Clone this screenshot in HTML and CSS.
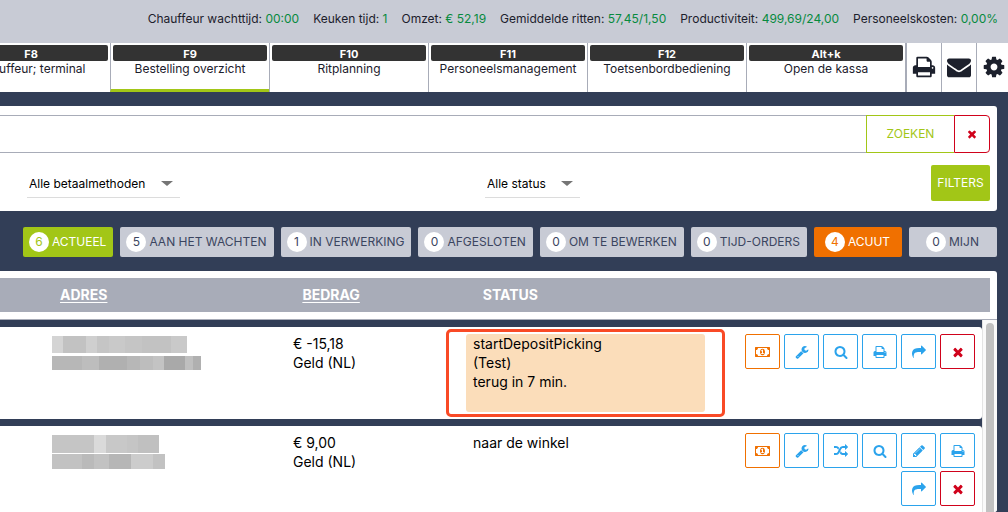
FILE: index.html
```html
<!DOCTYPE html>
<html lang="nl">
<head>
<meta charset="utf-8">
<meta name="viewport" content="width=device-width, initial-scale=1">
<title>Bestelling overzicht</title>
<link rel="stylesheet" href="styles.css">
</head>
<body>
<svg class="sprite" aria-hidden="true">
  <symbol id="print" viewBox="0 0 1792 1792"><path d="M448 1536h896v-256h-896v256zm0-640h896v-384h-160q-40 0-68-28t-28-68v-160h-640v640zm1152 64q0-26-19-45t-45-19-45 19-19 45 19 45 45 19 45-19 19-45zm128 0v416q0 13-9.500 22.500t-22.500 9.500h-224v160q0 40-28 68t-68 28h-960q-40 0-68-28t-28-68v-160h-224q-13 0-22.500-9.500t-9.500-22.500v-416q0-79 56.500-135.500t135.500-56.500h64v-544q0-40 28-68t68-28h672q40 0 88 20t76 48l152 152q28 28 48 76t20 88v256h64q79 0 135.500 56.500t56.500 135.500z"/></symbol>
  <symbol id="envelope" viewBox="0 0 1792 1792"><path d="M1792 710v794q0 66-47 113t-113 47h-1472q-66 0-113-47t-47-113v-794q44 49 101 87 362 246 497 345 57 42 92.500 65.500t94.500 48 110 24.500h2q51 0 110-24.500t94.500-48 92.500-65.500q170-123 498-345 57-39 100-87zm0-294q0 79-49 151t-122 123q-376 261-468 325-10 7-42.500 31t-54 38.500-52 32.500-57.500 27-50 9h-2q-23 0-50-9t-57.500-27-52-32.500-54-38.500-42.500-31q-91-64-262-182.500t-205-142.500q-62-42-117-115.500t-55-136.500q0-78 41.500-130t118.500-52h1472q65 0 112.500 47t47.500 113z"/></symbol>
  <symbol id="cog" viewBox="0 0 1792 1792"><path d="M1152 896q0-106-75-181t-181-75-181 75-75 181 75 181 181 75 181-75 75-181zm512-109v222q0 12-8 23t-20 13l-185 28q-19 54-39 91 35 50 107 138 10 12 10 25t-9 23q-27 37-99 108t-94 71q-12 0-26-9l-138-108q-44 23-91 38-16 136-29 186-7 28-36 28h-222q-14 0-24.500-8.500t-11.500-21.500l-28-184q-49-16-90-37l-141 107q-10 9-25 9-14 0-25-11-126-114-165-168-7-10-7-23 0-12 8-23 15-21 51-66.500t54-70.500q-27-50-41-99l-183-27q-13-2-21-12.500t-8-23.500v-222q0-12 8-23t19-13l186-28q14-46 39-92-40-57-107-138-10-12-10-24 0-10 9-23 26-36 98.500-107.500t94.500-71.500q13 0 26 10l138 107q44-23 91-38 16-136 29-186 7-28 36-28h222q14 0 24.500 8.500t11.500 21.500l28 184q49 16 90 37l142-107q9-9 24-9 13 0 25 10 129 119 165 170 7 8 7 22 0 12-8 23-15 21-51 66.500t-54 70.500q26 50 41 98l183 28q13 2 21 12.500t8 23.500z"/></symbol>
  <symbol id="times" viewBox="0 0 1792 1792"><path d="M1490 1322q0 40-28 68l-136 136q-28 28-68 28t-68-28l-294-294-294 294q-28 28-68 28t-68-28l-136-136q-28-28-28-68t28-68l294-294-294-294q-28-28-28-68t28-68l136-136q28-28 68-28t68 28l294 294 294-294q28-28 68-28t68 28l136 136q28 28 28 68t-28 68l-294 294 294 294q28 28 28 68z"/></symbol>
  <symbol id="search" viewBox="0 0 1792 1792"><path d="M1216 832q0-185-131.500-316.500t-316.500-131.500-316.500 131.500-131.500 316.500 131.500 316.500 316.500 131.500 316.500-131.500 131.500-316.500zm512 832q0 52-38 90t-90 38q-54 0-90-38l-343-342q-179 124-399 124-143 0-273.500-55.500t-225-150-150-225-55.500-273.500 55.500-273.500 150-225 225-150 273.500-55.500 273.500 55.500 225 150 150 225 55.500 273.500q0 220-124 399l343 343q37 37 37 90z"/></symbol>
  <symbol id="wrench" viewBox="0 0 1792 1792"><path d="M448 1472q0-26-19-45t-45-19-45 19-19 45 19 45 45 19 45-19 19-45zm644-420l-682 682q-37 37-90 37-52 0-91-37l-106-108q-38-36-38-90 0-53 38-91l681-681q39 98 114.500 173.500t173.500 114.500zm634-435q0 39-23 106-47 134-164.500 217.500t-258.500 83.500q-185 0-316.500-131.500t-131.500-316.500 131.500-316.500 316.500-131.500q58 0 121.500 16.500t107.500 46.500q16 11 16 28t-16 28l-293 169v224l193 107q5-3 79-48.500t135.500-81 70.500-35.500q15 0 23.500 10t8.500 25z"/></symbol>
  <symbol id="random" viewBox="0 0 1792 1792"><path d="M666 481q-60 92-137 273-22-45-37-72.500t-40.500-63.500-51-56.500-63-35-81.500-14.500h-224q-14 0-23-9t-9-23v-192q0-14 9-23t23-9h224q250 0 410 225zm1126 799q0 14-9 23l-320 320q-9 9-23 9-13 0-22.500-9.500t-9.500-22.500v-192q-32 0-85 .5t-81 1-73-1-71-5-64-10.500-63-18.500-58-28.500-59-40-55-53.500-56-69.500q59-93 136-273 22 45 37 72.500t40.500 63.500 51 56.500 63 35 81.500 14.500h256v-192q0-14 9-23t23-9q12 0 24 10l319 319q9 9 9 23zm0-896q0 14-9 23l-320 320q-9 9-23 9-13 0-22.500-9.500t-9.500-22.500v-192h-256q-48 0-87 15t-69 45-51 61.500-45 77.500q-32 62-78 171-29 66-49.500 111t-54 105-64 100-74 83-90 68.500-106.500 42-128 16.500h-224q-14 0-23-9t-9-23v-192q0-14 9-23t23-9h224q48 0 87-15t69-45 51-61.500 45-77.500q32-62 78-171 29-66 49.500-111t54-105 64-100 74-83 90-68.500 106.500-42 128-16.500h256v-192q0-14 9-23t23-9q12 0 24 10l319 319q9 9 9 23z"/></symbol>
  <symbol id="pencil" viewBox="0 0 1792 1792"><path d="M491 1536l91-91-235-235-91 91v107h128v128h107zm523-928q0-22-22-22-10 0-17 7l-542 542q-7 7-7 17 0 22 22 22 10 0 17-7l542-542q7-7 7-17zm-54-192l416 416-832 832h-416v-416zm683 96q0 53-37 90l-166 166-416-416 166-165q36-38 90-38 53 0 91 38l235 234q37 39 37 91z"/></symbol>
  <symbol id="share" viewBox="0 0 1792 1792"><path d="M1792 640q0 26-19 45l-512 512q-19 19-45 19t-45-19-19-45v-256h-224q-98 0-175.500 6t-154 21.500-133 42.500-105.500 69.500-80 101-48.500 138.500-17.500 181q0 55 5 123 0 6 2.500 23.500t2.500 26.500q0 15-8.500 25t-23.500 10q-16 0-28-17-7-9-13-22t-13.500-30-10.500-24q-127-285-127-451 0-199 53-333 162-403 875-403h224v-256q0-26 19-45t45-19 45 19l512 512q19 19 19 45z"/></symbol>
  <symbol id="money" viewBox="0 0 1920 1792"><path d="M768 1152h384v-96h-128v-448h-114l-148 137 77 80q42-37 55-57h2v288h-128v96zm512-256q0 70-21 142t-59.500 134-101.500 101-138 39-138-39-101.500-101-59.500-134-21-142 21-142 59.500-134 101.500-101 138-39 138 39 101.500 101 59.500 134 21 142zm512 256v-512q-106 0-181-75t-75-181h-1152q0 106-75 181t-181 75v512q106 0 181 75t75 181h1152q0-106 75-181t181-75zm128-832v1152q0 26-19 45t-45 19h-1792q-26 0-45-19t-19-45v-1152q0-26 19-45t45-19h1792q26 0 45 19t19 45z"/></symbol>
</svg>

<header>
  <div class="stats">
    <span>Chauffeur wachttijd: <b>00:00</b></span>
    <span>Keuken tijd: <b>1</b></span>
    <span>Omzet: <b>€ 52,19</b></span>
    <span>Gemiddelde ritten: <b>57,45/1,50</b></span>
    <span>Productiviteit: <b>499,69/24,00</b></span>
    <span>Personeelskosten: <b>0,00%</b></span>
  </div>
  <nav class="tabs">
    <a class="tab" href="#terminal"><kbd>F8</kbd>Chauffeur; terminal</a>
    <a class="tab active" href="#overzicht"><kbd>F9</kbd>Bestelling overzicht</a>
    <a class="tab" href="#ritplanning"><kbd>F10</kbd>Ritplanning</a>
    <a class="tab" href="#personeel"><kbd>F11</kbd>Personeelsmanagement</a>
    <a class="tab" href="#toetsen"><kbd>F12</kbd>Toetsenbordbediening</a>
    <a class="tab" href="#kassa"><kbd>Alt+k</kbd>Open de kassa</a>
    <div class="tools">
      <button type="button" aria-label="Afdrukken"><svg><use href="#print"/></svg></button>
      <button type="button" aria-label="Berichten"><svg><use href="#envelope"/></svg></button>
      <button type="button" aria-label="Instellingen"><svg><use href="#cog"/></svg></button>
    </div>
  </nav>
</header>

<main>
  <form class="panel filter-panel">
    <div class="search">
      <input type="text" aria-label="Zoeken">
      <button class="search-button" type="button">ZOEKEN</button>
      <button class="clear-button" type="button" aria-label="Wissen"><svg><use href="#times"/></svg></button>
    </div>
    <div class="filters">
      <div class="filter"><span class="select-wrap"><select aria-label="Betaalmethode"><option>Alle betaalmethoden</option></select></span></div>
      <div class="filter"><span class="select-wrap"><select aria-label="Status"><option>Alle status</option></select></span></div>
      <button class="filters-button" type="button">FILTERS</button>
    </div>
  </form>

  <div class="pills">
    <button class="pill green" type="button"><span class="count">6</span>ACTUEEL</button>
    <button class="pill" type="button"><span class="count">5</span>AAN HET WACHTEN</button>
    <button class="pill" type="button"><span class="count">1</span>IN VERWERKING</button>
    <button class="pill" type="button"><span class="count">0</span>AFGESLOTEN</button>
    <button class="pill" type="button"><span class="count">0</span>OM TE BEWERKEN</button>
    <button class="pill" type="button"><span class="count">0</span>TIJD-ORDERS</button>
    <button class="pill orange" type="button"><span class="count">4</span>ACUUT</button>
    <button class="pill" type="button"><span class="count">0</span>MIJN</button>
  </div>

  <section class="panel orders">
    <table>
      <thead>
        <tr><th><a href="#adres">ADRES</a></th><th><a href="#bedrag">BEDRAG</a></th><th>STATUS</th><th></th></tr>
      </thead>
      <tbody>
        <tr>
          <td>
            <svg class="masked" viewBox="0 0 149 36" aria-hidden="true">
              <path fill="#d4d4d4" d="M0 2h11v17H0z"/><path fill="#c2c2c2" d="M11 2h23v17H11zM90 2h29v17H90z"/><path fill="#cfcfcf" d="M34 2h11v17H34z"/><path fill="#c5c5c5" d="M45 2h12v17H45zM73 2h17v17H73z"/><path fill="#c9c9c9" d="M57 2h16v17H57zM119 2h16v17h-16z"/>
              <path fill="#b7b7b7" d="M0 22h30v14H0zM75 22h13v14H75z"/><path fill="#bdbdbd" d="M30 22h17v14H30zM88 22h13v14H88z"/><path fill="#b0b0b0" d="M47 22h28v14H47zM141 22h8v14h-8z"/><path fill="#c3c3c3" d="M101 22h11v14h-11z"/><path fill="#a9a9a9" d="M112 22h21v14h-21z"/><path fill="#bfbfbf" d="M133 22h8v14h-8z"/>
            </svg>
          </td>
          <td>€ -15,18<br>Geld (NL)</td>
          <td class="status waiting">startDepositPicking<br>(Test)<br>terug in 7 min.</td>
          <td class="actions">
            <button class="action pay" type="button" aria-label="Betaling"><svg><use href="#money"/></svg></button>
            <button class="action" type="button" aria-label="Aanpassen"><svg><use href="#wrench"/></svg></button>
            <button class="action" type="button" aria-label="Bekijken"><svg><use href="#search"/></svg></button>
            <button class="action" type="button" aria-label="Afdrukken"><svg><use href="#print"/></svg></button>
            <button class="action" type="button" aria-label="Doorsturen"><svg><use href="#share"/></svg></button>
            <button class="action remove" type="button" aria-label="Verwijderen"><svg><use href="#times"/></svg></button>
          </td>
        </tr>
        <tr>
          <td>
            <svg class="masked" viewBox="0 0 149 36" aria-hidden="true">
              <path fill="#c5c5c5" d="M0 2h42v18H0zM75 2h11v18H75z"/><path fill="#dadada" d="M42 2h12v18H42z"/><path fill="#c8c8c8" d="M54 2h21v18H54z"/><path fill="#c0c0c0" d="M86 2h21v18H86z"/>
              <path fill="#c2c2c2" d="M0 21h30v15H0zM42 21h15v15H42zM101 21h12v15h-12z"/><path fill="#bababa" d="M30 21h12v15H30z"/><path fill="#b6b6b6" d="M57 21h22v15H57z"/><path fill="#cccccc" d="M79 21h22v15H79z"/>
            </svg>
          </td>
          <td>€ 9,00<br>Geld (NL)</td>
          <td class="status">naar de winkel</td>
          <td class="actions">
            <button class="action pay" type="button" aria-label="Betaling"><svg><use href="#money"/></svg></button>
            <button class="action" type="button" aria-label="Aanpassen"><svg><use href="#wrench"/></svg></button>
            <button class="action" type="button" aria-label="Wisselen"><svg><use href="#random"/></svg></button>
            <button class="action" type="button" aria-label="Bekijken"><svg><use href="#search"/></svg></button>
            <button class="action" type="button" aria-label="Bewerken"><svg><use href="#pencil"/></svg></button>
            <button class="action" type="button" aria-label="Afdrukken"><svg><use href="#print"/></svg></button>
            <button class="action" type="button" aria-label="Doorsturen"><svg><use href="#share"/></svg></button>
            <button class="action remove" type="button" aria-label="Verwijderen"><svg><use href="#times"/></svg></button>
          </td>
        </tr>
      </tbody>
    </table>
    <div class="scrollbar"><div class="thumb"></div></div>
  </section>
</main>
</body>
</html>
```

FILE: styles.css
```css
:root {
  --navy: #323e57;
  --grey: #c8cbd5;
  --mid: #a8acb8;
  --green: #a2c617;
  --orange: #f07000;
  --blue: #2ba3ec;
  --red: #d0021b;
  --ink: #1c202c;
}

* { box-sizing: border-box; }

body {
  margin: 0;
  height: 100vh;
  overflow: hidden;
  display: flex;
  flex-direction: column;
  background: var(--navy);
  color: #000;
  font: 14px/19px Inter, "Liberation Sans", sans-serif;
}

button, input, select { font: inherit; margin: 0; }
button { cursor: pointer; padding: 0; }
svg { display: block; fill: currentColor; }
.sprite { position: absolute; width: 0; height: 0; }

.stats {
  display: flex;
  justify-content: flex-end;
  gap: 14px;
  padding: 9px 10px 15px;
  background: var(--grey);
  color: var(--ink);
  font-size: 12px;
  white-space: nowrap;
}
.stats b { font-weight: 400; color: #078a3e; }

.tabs {
  display: flex;
  justify-content: flex-end;
  height: 49px;
  overflow: hidden;
  background: #fff;
}
.tab {
  flex: 0 0 159px;
  padding: 2px 2px 0;
  border-left: 1px solid var(--mid);
  color: var(--ink);
  font-size: 12px;
  line-height: 16px;
  text-align: center;
  text-decoration: none;
  white-space: nowrap;
}
.tab.active { border-bottom: 3px solid var(--green); }
.tab kbd {
  display: block;
  border-radius: 2px;
  background: #333;
  color: #fff;
  font: 700 11px/18px Inter, "Liberation Sans", sans-serif;
  height: 16px;
}
.tools { display: flex; flex: none; border-left: 2px solid var(--mid); }
.tools button {
  width: 35px;
  display: grid;
  place-items: center;
  padding-bottom: 1px;
  border: 0;
  border-right: 1px solid var(--mid);
  background: none;
  color: var(--ink);
}
.tools button:last-child { width: 31px; padding-left: 2px; border: 0; }
.tools svg { width: 24px; height: 24px; }

main {
  flex: 1;
  min-height: 0;
  display: flex;
  flex-direction: column;
  padding: 14px 11px 0 0;
}
.panel { background: #fff; border-radius: 0 3px 3px 0; }

.filter-panel { padding: 9px 7px 10px 0; }
.search { display: flex; height: 38px; }
.search input {
  flex: 1;
  min-width: 0;
  border: solid var(--mid);
  border-width: 1px 0;
  outline: 0;
}
.search-button {
  width: 88px;
  padding-bottom: 2px;
  border: 1px solid var(--green);
  border-right: 0;
  background: #fff;
  color: var(--green);
  font-size: 12px;
}
.clear-button {
  width: 36px;
  display: grid;
  place-items: center;
  border: 1px solid var(--red);
  border-radius: 0 4px 4px 0;
  background: #fff;
  color: var(--red);
}
.clear-button svg { width: 12px; height: 12px; }

.filters { display: flex; padding-top: 12px; }
.filter { flex: 0 0 458px; }
.filter:first-child { padding-left: 27px; flex-basis: 485px; }
.filter:nth-child(2) { flex: 1; }
.select-wrap {
  position: relative;
  display: inline-block;
  border-bottom: 1px solid #dcdcdc;
}
.select-wrap::after {
  content: "";
  position: absolute;
  right: 7px;
  top: 16px;
  border: solid transparent;
  border-width: 5px 6px 0;
  border-top-color: #757575;
  pointer-events: none;
}
.select-wrap select {
  appearance: none;
  display: block;
  height: 32px;
  padding: 5px 34px 1px 2px;
  border: 0;
  background: none;
  color: #000;
  font-size: 12px;
}
.filters-button {
  width: 59px;
  height: 36px;
  padding-bottom: 2px;
  border: 0;
  border-radius: 2px;
  background: var(--green);
  color: #fff;
  font-size: 12px;
}

.pills { display: flex; justify-content: flex-end; gap: 7px; padding: 16px 0 14px; }
.pill {
  display: flex;
  align-items: center;
  justify-content: center;
  gap: 3px;
  min-width: 88px;
  height: 30px;
  padding: 0 7px 1px 6px;
  border: 0;
  border-radius: 2px;
  background: var(--grey);
  color: #3b4560;
  font-size: 12px;
  white-space: nowrap;
}
.count {
  width: 20px;
  line-height: 20px;
  border-radius: 50%;
  background: #fff;
  color: #3b4560;
}
.green { background: var(--green); color: #fff; }
.green .count { color: var(--green); }
.orange { background: var(--orange); color: #fff; }
.orange .count { color: var(--orange); }

.orders {
  flex: 1;
  min-height: 0;
  display: grid;
  grid-template-columns: 1fr 15px;
  grid-template-rows: auto 1fr;
  padding-top: 7px;
  overflow: hidden;
}
table { display: contents; }
tr { display: grid; grid-template-columns: 293fr 173fr 239fr 277fr; }
thead {
  grid-column: 1 / 3;
  display: block;
  padding: 0 7px 7px 0;
  border-bottom: 1px solid var(--mid);
}
thead tr { background: var(--mid); color: #fff; line-height: 34px; }
th { padding: 0 0 0 7px; text-align: left; font-size: 14px; }
th:first-child { padding-left: 60px; }
th:nth-child(3) { padding-left: 13px; }
th a { color: inherit; text-underline-offset: 2px; }

tbody {
  display: flex;
  flex-direction: column;
  gap: 7px;
  min-height: 0;
  padding-top: 7px;
  background: var(--navy);
}
tbody tr { min-height: 92px; flex: none; padding: 7px 0; background: #fff; border-radius: 0 3px 3px 0; }
td { padding: 0; }
td:first-child { padding: 0 0 0 52px; }
.masked { width: 149px; height: 36px; }
td.status { padding-left: 7px; position: relative; }
.waiting { background: #fbddba; border-radius: 3px; }
.waiting::after {
  content: "";
  position: absolute;
  inset: -5px -20px;
  border: 3px solid #f94a26;
  border-radius: 5px;
}
td.actions {
  display: flex;
  flex-wrap: wrap;
  align-content: flex-start;
  justify-content: flex-end;
  gap: 3px 4px;
  padding: 0 7px 0 33px;
}
.action {
  width: 35px;
  height: 35px;
  display: grid;
  place-items: center;
  border: 1px solid var(--blue);
  border-radius: 2px;
  background: #fff;
  color: var(--blue);
}
.action svg { width: 14px; height: 14px; }
.pay { border-color: var(--orange); color: var(--orange); }
.pay svg { width: 15px; }
.remove { border-color: var(--red); color: var(--red); }

.scrollbar { padding: 3px 3px 0; border-left: 1px solid #e4e4e4; background: #fafafa; }
.thumb { height: 100%; border-radius: 4px 4px 0 0; background: #c1c1c1; }
```
